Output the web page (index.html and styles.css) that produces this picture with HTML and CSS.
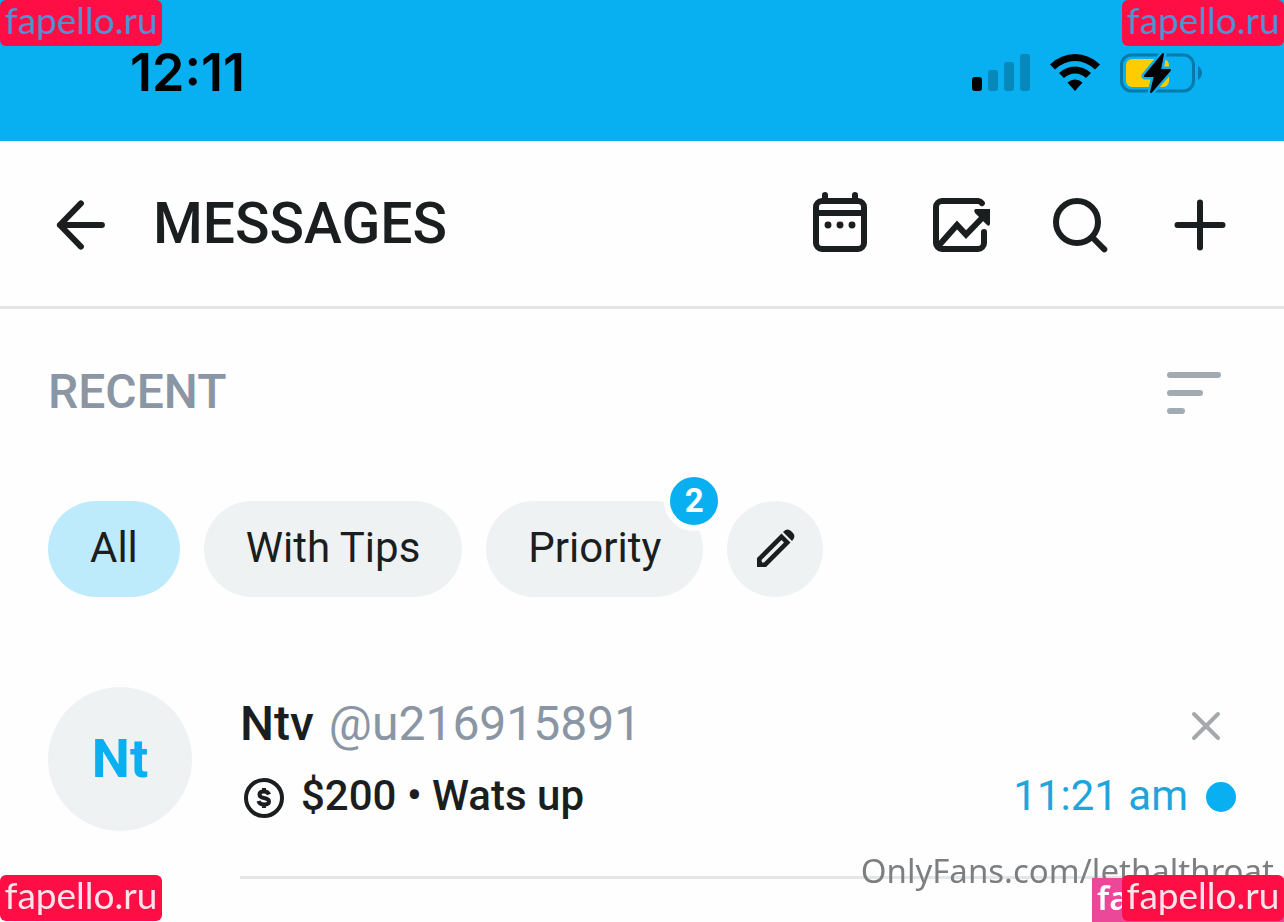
FILE: index.html
```html
<!DOCTYPE html>
<html lang="en">

<head>
	<meta charset="utf-8">
	<meta name="viewport" content="width=device-width, initial-scale=1">
	<title>Messages</title>
	<link rel="stylesheet" href="styles.css">
</head>

<body>

	<div class="statusbar">
		<span class="clock">12:11</span>
		<div class="indicators">
			<svg class="signal" viewBox="0 0 58 38" aria-hidden="true">
				<rect x="0" y="23" width="10" height="14" rx="3" />
				<g opacity=".22">
					<rect x="16" y="16" width="10" height="21" rx="3" />
					<rect x="32" y="8" width="10" height="29" rx="3" />
					<rect x="48" y="0" width="10" height="37" rx="3" />
				</g>
			</svg>
			<svg class="wifi" viewBox="0 0 50 38" aria-hidden="true">
				<path d="M0 10.500Q11 0 25 0T50 10.500L45 15.500Q36 7 25 7T5 15.500Z" />
				<path d="M9 19Q16 12.500 25 12.500T41 19L36 24Q31 19.500 25 19.500T14 24Z" />
				<path d="M17.500 28.500Q21 25.500 25 25.500T32.500 28.500L25 37Z" />
			</svg>
			<svg class="battery" viewBox="0 0 82 42" aria-hidden="true">
				<rect x="1.500" y="3" width="72" height="36" rx="10" fill="none" stroke="#067ba9" stroke-width="3" />
				<path d="M78 14q4 3 4 7t-4 7z" fill="#067ba9" />
				<rect x="6" y="7" width="43" height="28" rx="6" fill="#ffcc00" />
				<path d="M43 2L25 24H35L31 40L50 18H40Z" fill="#08aff1" stroke="#08aff1" stroke-width="7" stroke-linejoin="round" />
				<path d="M43 2L25 24H35L31 40L50 18H40Z" stroke="#000" stroke-width="2" stroke-linejoin="round" />
			</svg>
		</div>
	</div>

	<header class="header">
		<button class="icon-btn" aria-label="Back">
			<svg viewBox="0 0 24 24"><path d="M19.300 12H5.300M12.300 4.800L5.300 12l7 7.200" /></svg>
		</button>
		<h1>MESSAGES</h1>
		<div class="actions">
			<button class="icon-btn" aria-label="Calendar">
				<svg viewBox="0 0 24 24">
					<rect x="4" y="4" width="16" height="16" rx="2" />
					<path d="M4 8h16M7 2v2M17 2v2" />
					<path d="M8 12h.01M12 12h.01M16 12h.01" stroke-width="2.300" />
				</svg>
			</button>
			<button class="icon-btn" aria-label="Statistics">
				<svg viewBox="0 0 24 24">
					<path d="M19.300 4.700A2 2 0 0 0 18 4H6a2 2 0 0 0-2 2v12a2 2 0 0 0 2 2h12a2 2 0 0 0 2-2v-3.700" />
					<path d="M4.800 19L11 12l3 3.200L20 9" stroke-linejoin="miter" />
					<path class="solid" d="M17.200 6.700H22v4.900q-.2 1-1 .4l-4-4q-.6-1 .2-1.300z" />
				</svg>
			</button>
			<button class="icon-btn" aria-label="Search">
				<svg viewBox="0 0 24 24"><circle cx="11" cy="11" r="7" /><path d="M16 16l4.100 4.100" /></svg>
			</button>
			<button class="icon-btn" aria-label="New message">
				<svg viewBox="0 0 24 24"><path d="M12 4.500v15M4.500 12h15" /></svg>
			</button>
		</div>
	</header>

	<main>
		<div class="section-head">
			<h2>RECENT</h2>
			<button class="icon-btn muted" aria-label="Sort">
				<svg viewBox="0 0 24 24"><path d="M2 6h16M2 12h10M2 18h4" /></svg>
			</button>
		</div>

		<div class="filters">
			<button class="chip active">All</button>
			<button class="chip">With Tips</button>
			<button class="chip">Priority<span class="badge">2</span></button>
			<button class="chip edit" aria-label="Edit filters">
				<svg viewBox="0 0 48 48">
					<path d="M6 42V33L30.500 8.500L39.500 17.500L15 42ZM11 37.500H13L33 17.500L30.500 15L10.500 35Z" fill-rule="evenodd" />
					<path d="M32 7L34.500 5Q37.500 3.500 40 6L42 8Q44.500 11 42.500 14L41 16Z" />
				</svg>
			</button>
		</div>

		<article class="chat">
			<div class="avatar">Nt</div>
			<div class="chat-body">
				<div class="line">
					<strong class="name">Ntv</strong>
					<a class="handle" href="#">@u216915891</a>
					<button class="close" aria-label="Remove chat">
						<svg viewBox="0 0 30 30"><path d="M3 3l24 24M27 3L3 27" /></svg>
					</button>
				</div>
				<div class="line second">
					<svg class="coin" viewBox="0 0 42 42" aria-hidden="true">
						<circle cx="21" cy="21" r="18" />
						<path d="M26 17.500Q25 14.500 21 14.500Q16.500 14.500 16.500 17.500Q16.500 20.300 21 21Q26 21.800 26 24.500Q26 27.500 21 27.500Q16.500 27.500 15.500 24M21 11v4M21 27v4" />
					</svg>
					<span class="preview">$200 • Wats up</span>
					<time>11:21 am</time>
					<span class="unread"></span>
				</div>
			</div>
		</article>
	</main>

	<div class="credit">OnlyFans.com/lethalthroat</div>
	<div class="mark top left">fapello.ru</div>
	<div class="mark top right">fapello.ru</div>
	<div class="mark bottom left">fapello.ru</div>
	<div class="under">fa</div>
	<div class="mark bottom right">fapello.ru</div>

</body>

</html>
```
FILE: styles.css
```css
* {
	box-sizing: border-box;
}
body {
	margin: 0;
	min-height: 100vh;
	background: #fefefe;
	color: #1b1e1f;
	font-family: Roboto, "Liberation Sans", sans-serif;
}
button {
	border: 0;
	padding: 0;
	background: none;
	color: inherit;
	font: inherit;
}
svg {
	display: block;
}
h1, h2 {
	margin: 0;
	font-weight: 500;
}

/* phone status bar */
.statusbar {
	display: flex;
	align-items: center;
	justify-content: space-between;
	height: 141px;
	padding: 4px 82px 0 130px;
	background: #08aff1;
	color: #000;
}
.clock {
	font: 600 52px/60px Inter, sans-serif;
}
.indicators {
	display: flex;
	align-items: center;
	gap: 20px;
}
.signal {
	width: 58px;
	height: 38px;
}
.wifi {
	width: 50px;
	height: 38px;
}
.battery {
	width: 82px;
	height: 42px;
}

/* title bar */
.header {
	display: flex;
	align-items: center;
	height: 168px;
	padding: 3px 48px 0 44px;
	border-bottom: 3px solid #e3e5e6;
}
.header h1 {
	margin-left: 37px;
	padding-bottom: 2px;
	font-size: 57px;
	line-height: 64px;
}
.actions {
	display: flex;
	gap: 48px;
	margin-left: auto;
}
.icon-btn {
	width: 72px;
	height: 72px;
}
.icon-btn svg {
	width: 72px;
	height: 72px;
	fill: none;
	stroke: currentColor;
	stroke-width: 2;
	stroke-linecap: round;
	stroke-linejoin: round;
}
.icon-btn .solid {
	fill: currentColor;
	stroke: none;
}
.muted {
	color: #a2abb2;
}

main {
	padding: 48px 48px 0;
}
.section-head {
	display: flex;
	align-items: center;
	justify-content: space-between;
	height: 72px;
}
.section-head h2 {
	color: #8a96a3;
	font-size: 48px;
	line-height: 72px;
	padding-bottom: 2px;
}

/* filter chips */
.filters {
	display: flex;
	gap: 24px;
	margin-top: 72px;
}
.chip {
	position: relative;
	height: 96px;
	padding: 0 42px 4px;
	border-radius: 48px;
	background: #eef2f3;
	font-size: 42px;
}
.chip.active {
	background: #bdebfc;
}
.chip.edit {
	display: grid;
	place-items: center;
	width: 96px;
	padding: 0;
}
.edit svg {
	width: 48px;
	height: 48px;
	fill: currentColor;
}
.badge {
	position: absolute;
	top: -30px;
	right: -21px;
	width: 60px;
	height: 60px;
	border: 6px solid #fefefe;
	border-radius: 50%;
	background: #08aff1;
	color: #fff;
	font-size: 33px;
	font-weight: 700;
	line-height: 48px;
	text-align: center;
}

/* chat row */
.chat {
	display: flex;
	gap: 48px;
	margin: 90px -48px 0 0;
}
.avatar {
	width: 144px;
	height: 144px;
	border-radius: 50%;
	background: #eef2f3;
	color: #08aff1;
	font-size: 54px;
	font-weight: 700;
	line-height: 144px;
	text-align: center;
}
.chat-body {
	flex: 1;
	height: 192px;
	border-bottom: 3px solid #e3e5e6;
}
.line {
	display: flex;
	align-items: center;
	height: 72px;
	padding-right: 48px;
}
.name {
	font-size: 48px;
	font-weight: 500;
}
.handle {
	margin-left: 15px;
	color: #8a96a3;
	font-size: 48px;
	text-decoration: none;
}
.close {
	margin: 6px 15px 0 auto;
}
.close svg {
	width: 30px;
	height: 30px;
	fill: none;
	stroke: #a5a9ac;
	stroke-width: 4;
	stroke-linecap: round;
}
.second {
	font-size: 42px;
}
.coin {
	width: 42px;
	height: 42px;
	margin: 6px 16px 0 3px;
	fill: none;
	stroke: currentColor;
	stroke-width: 4;
}
.preview {
	font-weight: 500;
}
time {
	margin-left: auto;
	color: #1fa5dc;
}
.unread {
	width: 30px;
	height: 30px;
	margin: 4px 0 0 18px;
	border-radius: 50%;
	background: #08aff1;
}

/* overlaid labels */
.credit {
	position: fixed;
	right: 10px;
	bottom: 28px;
	color: #7c7e80;
	font: 33px/46px "Noto Sans", sans-serif;
}
.mark {
	position: fixed;
	width: 162px;
	height: 46px;
	border-radius: 6px;
	background: #ff0d45;
	color: #ffe3ea;
	font: 37px/40px Lato, sans-serif;
	text-align: center;
}
.top {
	top: 0;
	color: #5093d5;
}
.bottom {
	bottom: 1px;
}
.left {
	left: 0;
}
.right {
	right: 0;
}
.under {
	position: fixed;
	right: 0;
	bottom: 0;
	width: 192px;
	height: 44px;
	padding-left: 5px;
	background: #ec4899;
	color: #fff;
	font: 600 33px/40px "Noto Sans", sans-serif;
}
```
